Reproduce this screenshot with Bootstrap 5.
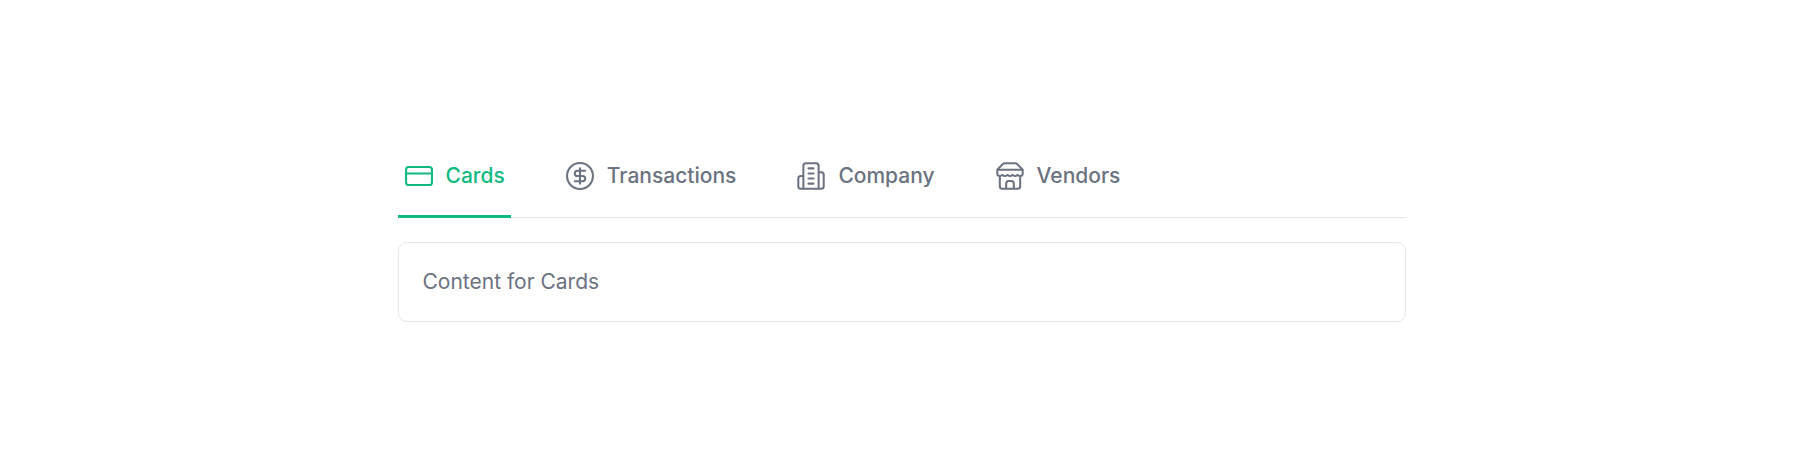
<!DOCTYPE html>
<html lang="en">
<head>
<meta charset="utf-8">
<meta name="viewport" content="width=device-width, initial-scale=1">
<title>Cards</title>
<link href="https://cdn.jsdelivr.net/npm/bootstrap@5.3.0/dist/css/bootstrap.min.css" rel="stylesheet">
<style>
  body { font-family: Inter, "Liberation Sans", sans-serif; font-size: 21px; line-height: 30px; color: #6b7280; }
  .panel-wrap { max-width: 1008px; }
  .tab-bar { gap: 0 48px; border-bottom: 0; box-shadow: inset 0 -1px #e5e7eb; }
  .tab-bar .nav-link { gap: 12px; padding: 24px 6px 27px; border: 0; border-radius: 0; margin: 0; color: #6b7280; font-weight: 500; background: none; }
  .tab-bar .nav-link:hover { color: #374151; }
  .tab-bar .nav-link.active { color: #10b981; background: none; box-shadow: inset 0 -3px #10b981; }
  .tab-icon { width: 30px; height: 30px; fill: none; stroke: currentColor; stroke-width: 1.6; stroke-linecap: round; stroke-linejoin: round; }
  .tab-panel { margin-top: 24px; padding: 24px; border: 1px solid #e5e7eb; border-radius: 9px; }
</style>
</head>
<body>
<main class="min-vh-100 d-flex align-items-center justify-content-center">
  <div class="panel-wrap w-100">
    <div class="nav nav-tabs tab-bar" role="tablist">
      <button class="nav-link active d-flex align-items-center" id="cards-tab" data-bs-toggle="tab" data-bs-target="#cards" type="button" role="tab" aria-controls="cards" aria-selected="true">
        <svg class="tab-icon" viewBox="0.4 0.4 23.2 23.2" aria-hidden="true"><rect x="2" y="5" width="20" height="14" rx="2"/><path d="M2 10h20"/></svg>
        <span>Cards</span>
      </button>
      <button class="nav-link d-flex align-items-center" id="transactions-tab" data-bs-toggle="tab" data-bs-target="#transactions" type="button" role="tab" aria-controls="transactions" aria-selected="false">
        <svg class="tab-icon" viewBox="0.4 0.4 23.2 23.2" aria-hidden="true"><circle cx="12" cy="12" r="10"/><path d="M16 8h-6a2 2 0 1 0 0 4h4a2 2 0 1 1 0 4H8M12 18V6"/></svg>
        <span>Transactions</span>
      </button>
      <button class="nav-link d-flex align-items-center" id="company-tab" data-bs-toggle="tab" data-bs-target="#company" type="button" role="tab" aria-controls="company" aria-selected="false">
        <svg class="tab-icon" viewBox="0.2 0.2 23.6 23.6" aria-hidden="true"><path d="M6 22V4a2 2 0 0 1 2-2h8a2 2 0 0 1 2 2v18ZM6 12H4a2 2 0 0 0-2 2v6a2 2 0 0 0 2 2h2M18 9h2a2 2 0 0 1 2 2v9a2 2 0 0 1-2 2h-2M10 6h4M10 10h4M10 14h4M10 18h4"/></svg>
        <span>Company</span>
      </button>
      <button class="nav-link d-flex align-items-center" id="vendors-tab" data-bs-toggle="tab" data-bs-target="#vendors" type="button" role="tab" aria-controls="vendors" aria-selected="false">
        <svg class="tab-icon" viewBox="0.2 0.2 23.6 23.6" aria-hidden="true"><path d="m2 7 4.41-4.41A2 2 0 0 1 7.83 2h8.34a2 2 0 0 1 1.42.59L22 7M4 12v8a2 2 0 0 0 2 2h12a2 2 0 0 0 2-2v-8M15 22v-4a2 2 0 0 0-2-2h-2a2 2 0 0 0-2 2v4M2 7h20M22 7v3a2 2 0 0 1-2 2a2.7 2.7 0 0 1-1.59-.63.7.7 0 0 0-.82 0A2.7 2.7 0 0 1 16 12a2.7 2.7 0 0 1-1.59-.63.7.7 0 0 0-.82 0A2.7 2.7 0 0 1 12 12a2.7 2.7 0 0 1-1.59-.63.7.7 0 0 0-.82 0A2.7 2.7 0 0 1 8 12a2.7 2.7 0 0 1-1.59-.63.7.7 0 0 0-.82 0A2.7 2.7 0 0 1 4 12a2 2 0 0 1-2-2V7"/></svg>
        <span>Vendors</span>
      </button>
    </div>
    <div class="tab-content tab-panel">
      <div class="tab-pane show active" id="cards" role="tabpanel" aria-labelledby="cards-tab">Content for Cards</div>
      <div class="tab-pane" id="transactions" role="tabpanel" aria-labelledby="transactions-tab"></div>
      <div class="tab-pane" id="company" role="tabpanel" aria-labelledby="company-tab"></div>
      <div class="tab-pane" id="vendors" role="tabpanel" aria-labelledby="vendors-tab"></div>
    </div>
  </div>
</main>
<script src="https://cdn.jsdelivr.net/npm/bootstrap@5.3.0/dist/js/bootstrap.bundle.min.js"></script>
</body>
</html>
